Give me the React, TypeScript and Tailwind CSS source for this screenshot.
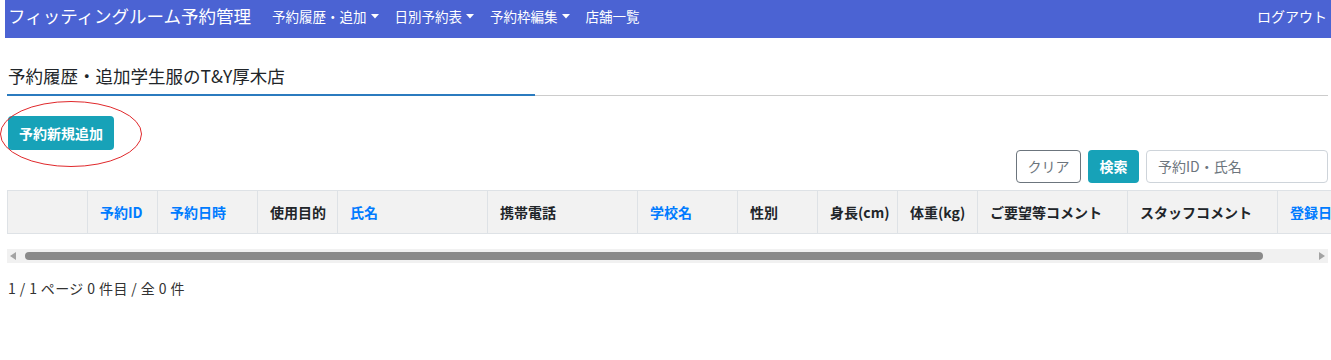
import React from "react";

const font = { fontFamily: '"Noto Sans CJK JP", "Noto Sans", sans-serif' };

function Caret() {
  return (
    <svg width="8" height="5" viewBox="0 0 8 5" className="ml-[4px] mt-[1px]">
      <path d="M0 0 L8 0 L4 4.5 Z" fill="white" />
    </svg>
  );
}

const columns = [
  { label: "", w: 80, link: false },
  { label: "予約ID", w: 70, link: true },
  { label: "予約日時", w: 100, link: true },
  { label: "使用目的", w: 80, link: false },
  { label: "氏名", w: 150, link: true },
  { label: "携帯電話", w: 150, link: false },
  { label: "学校名", w: 100, link: true },
  { label: "性別", w: 80, link: false },
  { label: "身長(cm)", w: 80, link: false },
  { label: "体重(kg)", w: 80, link: false },
  { label: "ご要望等コメント", w: 150, link: false },
  { label: "スタッフコメント", w: 150, link: false },
  { label: "登録日", w: 120, link: true },
];

export default function App() {
  return (
    <div className="w-[1331px] h-[360px] bg-white overflow-hidden" style={font}>
      <nav className="ml-[5px] h-[38px] bg-[#4b63d3] flex items-start pt-[4px] text-white">
        <div className="pl-[3px] text-[17.5px] leading-[24px]">
          フィッティングルーム予約管理
        </div>
        <ul className="flex ml-[21px] text-[13.5px] leading-[24px]">
          <li className="flex items-center mr-[16px]">
            予約履歴・追加
            <Caret />
          </li>
          <li className="flex items-center mr-[16px]">
            日別予約表
            <Caret />
          </li>
          <li className="flex items-center mr-[16px]">
            予約枠編集
            <Caret />
          </li>
          <li className="flex items-center">店舗一覧</li>
        </ul>
        <div className="ml-auto pr-[4px] text-[14px] leading-[24px]">ログアウト</div>
      </nav>

      <div className="pl-[7px] pr-[3px]">
        <h2 className="mt-[26px] pl-[1px] text-[17.5px] leading-[24px] text-[#212529]">
          予約履歴・追加学生服のT&amp;Y厚木店
        </h2>
        <div className="mt-[6px] flex h-[2px]">
          <div className="w-[528px] bg-[#2b7bbf]" />
          <div className="flex-1 h-[1px] bg-[#cccccc] mt-[0.5px]" />
        </div>

        <div className="relative mt-[20px] ml-[1px] w-fit">
          <button className="h-[34px] px-[11px] rounded-[4px] bg-[#17a2b8] text-white text-[14px] font-bold">
            予約新規追加
          </button>
          <svg
            className="absolute left-[-9px] top-[-16px]"
            width="144"
            height="68"
            viewBox="0 0 144 68"
          >
            <ellipse cx="72" cy="34" rx="70.5" ry="32.5" fill="none" stroke="#e0282b" strokeWidth="1" />
          </svg>
        </div>

        <div className="flex justify-end gap-[7px]">
          <button className="h-[33px] w-[65px] rounded-[4px] border border-[#6c757d] text-[#6c757d] text-[14px]">
            クリア
          </button>
          <button className="h-[33px] w-[51px] rounded-[4px] bg-[#17a2b8] text-white text-[14px] font-bold">
            検索
          </button>
          <div className="h-[33px] w-[182px] rounded-[4px] border border-[#ced4da] flex items-center px-[11px] text-[14px] text-[#6c757d]">
            予約ID・氏名
          </div>
        </div>

        <div className="mt-[7px] -mr-[3px] overflow-hidden">
          <table className="border-collapse table-fixed" style={{ width: 1390 }}>
            <colgroup>
              {columns.map((c, i) => (
                <col key={i} style={{ width: c.w }} />
              ))}
            </colgroup>
            <thead>
              <tr className="h-[43px] bg-[#f2f2f2]">
                {columns.map((c, i) => (
                  <th
                    key={i}
                    className={
                      "border border-[#dee2e6] px-[12px] text-left text-[14px] font-bold whitespace-nowrap " +
                      (c.link ? "text-[#007bff]" : "text-[#212529]")
                    }
                  >
                    {c.label}
                  </th>
                ))}
              </tr>
            </thead>
          </table>
        </div>

        <div className="mt-[15px] h-[14px] bg-[#f1f1f1] flex items-center px-[3px]">
          <svg width="7" height="8" viewBox="0 0 7 8">
            <path d="M6 0 L6 8 L0 4 Z" fill="#a3a3a3" />
          </svg>
          <div className="ml-[8px] w-[1238px] h-[8px] rounded-full bg-[#8a8a8a]" />
          <div className="flex-1" />
          <svg width="7" height="8" viewBox="0 0 7 8">
            <path d="M1 0 L1 8 L7 4 Z" fill="#a3a3a3" />
          </svg>
        </div>

        <div className="mt-[15px] pl-[1px] text-[14px] text-[#333333] leading-[20px] tracking-[0.4px]">
          1 / 1 ページ 0 件目 / 全 0 件
        </div>
      </div>
    </div>
  );
}
